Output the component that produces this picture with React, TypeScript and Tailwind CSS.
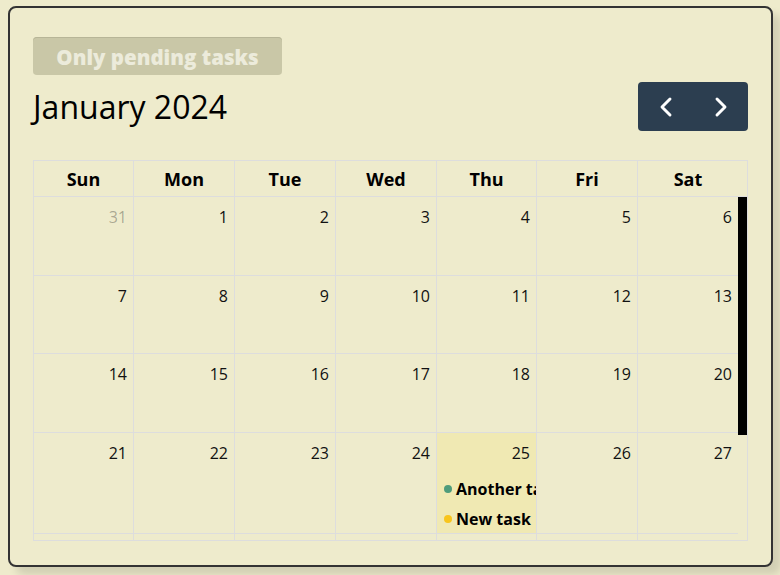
import { ChevronLeft, ChevronRight } from "lucide-react";

const dayNames = ["Sun", "Mon", "Tue", "Wed", "Thu", "Fri", "Sat"];

type Day = { n: number; other?: boolean; today?: boolean };

// four full weeks are in view; the fifth only shows its top edge
function buildWeeks(): Day[][] {
  const days: Day[] = [{ n: 31, other: true }];
  for (let i = 1; i <= 27; i++) days.push({ n: i, today: i === 25 });
  const weeks: Day[][] = [];
  for (let w = 0; w < 4; w++) weeks.push(days.slice(w * 7, w * 7 + 7));
  return weeks;
}

const events = [
  { title: "Another task", dot: "bg-[#4f9c7b]" },
  { title: "New task", dot: "bg-[#f8c51c]" },
];

const cols = "grid-cols-[100px_101px_101px_101px_100px_101px_1fr]";

export default function App() {
  const weeks = buildWeeks();

  return (
    <div className="h-[575px] w-[780px] overflow-hidden bg-[#eeebcc] pl-[8px] pt-[6px] font-['Open_Sans',sans-serif] text-black">
      <div className="flex h-[561px] w-[765px] flex-col rounded-lg border-2 border-[#333] bg-[#eeebcc] px-[23px] pt-[29px] shadow-[8px_8px_8px_rgba(0,0,0,0.12)]">
        <button className="flex h-[38px] w-[249px] items-center justify-center rounded-[4px] bg-[#c9c7a7] pt-[3px] text-[20.5px] font-extrabold text-[#ecebdb] shadow-[inset_0_1px_0_#b7b597]">
          Only pending tasks
        </button>

        <div className="mt-[7px] mb-[29px] flex h-[49px] items-center justify-between">
          <h2 className="text-[32px] leading-[48px] font-normal">January 2024</h2>
          <div className="flex h-[49px] overflow-hidden rounded-[4px] bg-[#2c3e50] text-white">
            <button className="flex w-[55px] items-center justify-center">
              <ChevronLeft size={32} strokeWidth={2.2} />
            </button>
            <button className="flex w-[55px] items-center justify-center">
              <ChevronRight size={32} strokeWidth={2.2} />
            </button>
          </div>
        </div>

        <div className="border border-[#ddd]">
          <div className="flex border-b border-[#ddd]">
            <div className={`grid flex-1 ${cols}`}>
              {dayNames.map((d, i) => (
                <div
                  key={d}
                  className={`pt-[5px] pb-[3px] text-center text-[18px] leading-[27px] font-bold ${i < 6 ? "border-r border-[#ddd]" : ""}`}
                >
                  {d}
                </div>
              ))}
            </div>
            <div className="w-[9px]" />
          </div>

          <div className="flex h-[343px]">
            <div className="flex-1 overflow-hidden">
              {weeks.map((week, wi) => (
                <div key={wi} className={`grid ${cols}`}>
                  {week.map((day, di) => (
                    <div
                      key={di}
                      className={`flex min-h-[78.7px] min-w-0 flex-col overflow-hidden border-b border-[#ddd] pb-[2px] ${di < 6 ? "border-r" : ""} ${day.today ? "bg-[rgba(255,220,40,0.15)]" : ""}`}
                    >
                      <div
                        className={`pt-[8px] pr-[6px] text-right text-[16px] leading-6 ${day.other ? "text-black/30" : "text-[#111]"}`}
                      >
                        {day.n}
                      </div>
                      {day.today && (
                        <div className="mt-[6px] flex flex-col">
                          {events.map((ev) => (
                            <div key={ev.title} className="mt-[6px] flex h-6 items-center pl-[7px] whitespace-nowrap">
                              <span className={`mr-[4px] h-[8px] w-[8px] shrink-0 rounded-full ${ev.dot}`} />
                              <span className="text-[16px] leading-6 font-bold">{ev.title}</span>
                            </div>
                          ))}
                        </div>
                      )}
                    </div>
                  ))}
                </div>
              ))}
              <div className={`grid h-[79px] ${cols}`}>
                {dayNames.map((d, i) => (
                  <div key={d} className={i < 6 ? "border-r border-[#ddd]" : ""} />
                ))}
              </div>
            </div>
            <div className="w-[9px]">
              <div className="h-[238px] w-full bg-black" />
            </div>
          </div>
        </div>
      </div>
    </div>
  );
}
